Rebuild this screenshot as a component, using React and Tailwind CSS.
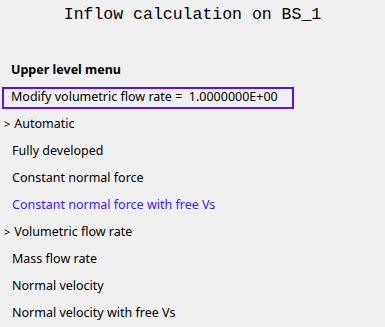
export default function App() {
  const font = { fontFamily: '"Noto Sans", "Open Sans", sans-serif' };
  const items = [
    { t: "> Automatic", arrow: true },
    { t: "Fully developed" },
    { t: "Constant normal force" },
    { t: "Constant normal force with free Vs", blue: true },
    { t: "> Volumetric flow rate", arrow: true },
    { t: "Mass flow rate" },
    { t: "Normal velocity" },
    { t: "Normal velocity with free Vs" },
  ];
  return (
    <div className="w-[385px] h-[327px] bg-[#f0f0f0] overflow-hidden text-black">
      <div className="h-[30px] flex items-center justify-center font-['Liberation_Mono',monospace] text-[16.5px] tracking-[0px] pt-[1px]">
        Inflow calculation on BS_1
      </div>
      <div className="flex flex-col pt-[27px] font-['Noto_Sans','Open_Sans',sans-serif] text-[12.5px]">
        <div className="h-[27px] flex items-center pl-[11px] font-bold">Upper level menu</div>
        <div className="h-[27px] flex items-center">
          <div className="ml-[2px] w-[292px] h-[22px] border-2 border-[#5a10ff] flex items-center pl-[7px] whitespace-pre">
            {"Modify volumetric flow rate =  1.0000000E+00"}
          </div>
        </div>
        {items.map((it, i) => (
          <div
            key={i}
            className={
              "h-[27px] flex items-center whitespace-pre " +
              (it.arrow ? "pl-[4px] " : "pl-[12px] ") +
              (it.blue ? "text-[#3a1cff]" : "")
            }
          >
            {it.arrow ? (
              <>
                <span className="text-[11px] mr-[4px]">&gt;</span>
                <span>{it.t.slice(2)}</span>
              </>
            ) : (
              it.t
            )}
          </div>
        ))}
      </div>
    </div>
  );
}
